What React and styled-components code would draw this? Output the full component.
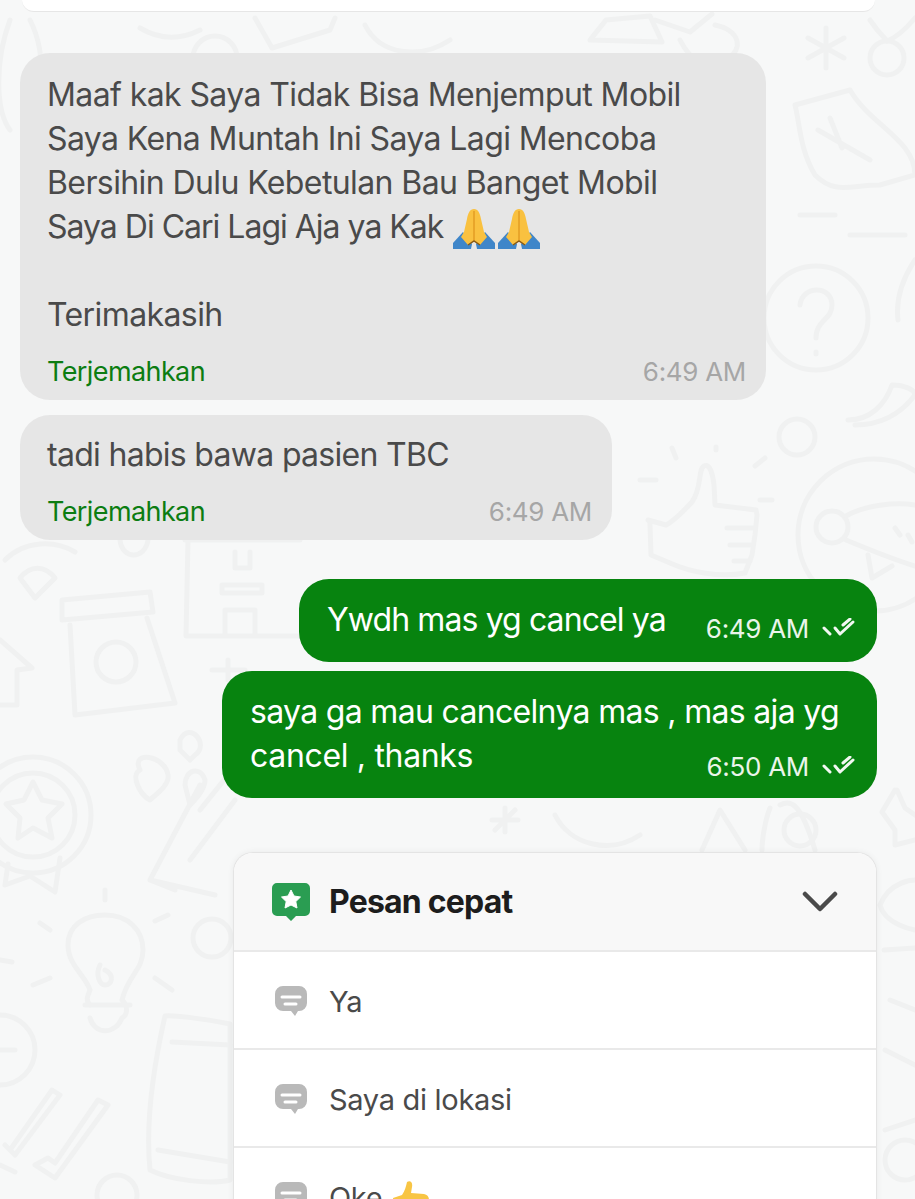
import React from 'react';
import styled, { createGlobalStyle } from 'styled-components';

const GlobalStyle = createGlobalStyle`
  html, body {
    margin: 0;
    padding: 0;
    background: #f7f8f8;
  }
`;

const Page = styled.div`
  position: relative;
  width: 915px;
  height: 1199px;
  overflow: hidden;
  background: #f7f8f8;
  font-family: 'Inter', 'Liberation Sans', sans-serif;
`;

const Wallpaper = styled.svg`
  position: absolute;
  inset: 0;
  width: 915px;
  height: 1199px;
  fill: none;
  stroke: #f0f1f1;
  stroke-width: 5;
  stroke-linecap: round;
  stroke-linejoin: round;
`;

const Thread = styled.div`
  position: relative;
  display: flex;
  flex-direction: column;
`;

const TopCard = styled.div`
  height: 12px;
  margin: 0 40px 41px 22px;
  background: #fff;
  border-bottom: 1px solid #e6e6e6;
  border-radius: 0 0 22px 22px;
  box-sizing: border-box;
`;

const Received = styled.div`
  box-sizing: border-box;
  width: ${p => p.$width}px;
  margin: 0 0 ${p => p.$after}px 20px;
  padding: ${p => p.$top}px 20px 10px 27px;
  background: #e6e6e6;
  border-radius: 30px;
  color: #4a4a4a;
`;

const MessageText = styled.div`
  font-size: 32px;
  line-height: 44px;
  letter-spacing: ${p => p.$spacing ?? -0.6}px;
  white-space: pre-line;
`;

const TightLine = styled.span`
  letter-spacing: -1px;
`;

const Emoji = styled.svg`
  display: inline-block;
  width: 44px;
  height: 42px;
  margin: -10px 0 -10px 1px;
  vertical-align: -2px;
`;

const ReceivedFooter = styled.div`
  display: flex;
  justify-content: space-between;
  align-items: center;
  height: 38px;
  margin-top: 15px;
`;

const Translate = styled.span`
  font-size: 27px;
  letter-spacing: -0.6px;
  color: #0c7d12;
`;

const Time = styled.span`
  font-size: 26px;
  letter-spacing: -0.3px;
  color: ${p => p.$light ? '#eaf5ea' : '#a6a6a6'};
`;

const Sent = styled.div`
  box-sizing: border-box;
  align-self: flex-end;
  width: ${p => p.$width}px;
  margin: 0 38px ${p => p.$after}px 0;
  padding: 19px 21px 20px 28px;
  background: #07830f;
  border-radius: 30px;
  color: #fff;
`;

const SentRow = styled.div`
  display: flex;
  justify-content: space-between;
  align-items: center;
  height: 44px;
`;

const Meta = styled.div`
  display: flex;
  align-items: center;
  gap: 13px;
  margin-top: ${p => p.$drop}px;
`;

const Ticks = styled.svg`
  width: 34px;
  height: 20px;
  fill: none;
  stroke: #f2f8f2;
  stroke-width: 3;
  stroke-linecap: round;
  stroke-linejoin: round;
`;

const QuickCard = styled.div`
  box-sizing: border-box;
  width: 644px;
  margin-left: 233px;
  background: #fff;
  border: 1px solid #e4e4e4;
  border-bottom: none;
  border-radius: 20px 20px 0 0;
  box-shadow: 0 0 6px rgba(0, 0, 0, 0.06);
  overflow: hidden;
`;

const QuickHeader = styled.div`
  box-sizing: border-box;
  display: flex;
  align-items: center;
  height: 99px;
  padding: 0 38px;
  background: #f8f8f8;
  border-bottom: 2px solid #e9e9e9;
`;

const QuickTitle = styled.div`
  flex: 1;
  margin-left: 19px;
  font-size: 32px;
  font-weight: 700;
  letter-spacing: -0.8px;
  color: #1d1d1d;
`;

const QuickRow = styled.div`
  box-sizing: border-box;
  display: flex;
  align-items: center;
  gap: 22px;
  height: 98px;
  padding: 2px 0 0 41px;
  border-bottom: 2px solid #e9e9e9;
  font-size: 29px;
  letter-spacing: -0.3px;
  color: #4a4a4a;
`;

const RowIcon = styled.svg`
  flex: none;
  width: 32px;
  height: 32px;
  margin-top: 2px;
`;

const ThumbEmoji = styled.svg`
  width: 42px;
  height: 42px;
  margin: -10px 0 -10px 8px;
  vertical-align: -4px;
`;

const PrayEmoji = () => (
  <Emoji viewBox="0 0 44 42">
    <path d="M1 35 L11 24 L20 36 L19 41 L1 41 Z" fill="#3f86c9" />
    <path d="M43 35 L33 24 L24 36 L25 41 L43 41 Z" fill="#3f86c9" />
    <path d="M22 1 C18 1 16 5 15 11 L12 24 L9 29 L16 37 L22 33 L28 37 L35 29 L32 24 L29 11 C28 5 26 1 22 1 Z" fill="#f9c140" />
    <path d="M22 3 L22 32" stroke="#e29a22" strokeWidth="1.4" fill="none" />
    <path d="M16 37 L22 33 L28 37" stroke="#8a5a14" strokeWidth="1.5" fill="none" />
  </Emoji>
);

const DoubleTick = () => (
  <Ticks viewBox="0 0 34 20">
    <path d="M2 10 L8 16" />
    <path d="M13 10 L18 16 L31 4" />
    <path d="M21 7 L28 1" />
  </Ticks>
);

const StarBadge = () => (
  <svg width="38" height="38" viewBox="0 0 38 38">
    <path d="M5 0 H33 A5 5 0 0 1 38 5 V28 A5 5 0 0 1 33 33 H24 L19 38 L14 33 H5 A5 5 0 0 1 0 28 V5 A5 5 0 0 1 5 0 Z" fill="#2a9d52" />
    <path d="M19 7 L22 13 L28.5 14 L23.8 18.6 L25 25 L19 22 L13 25 L14.2 18.6 L9.5 14 L16 13 Z" fill="#fff" stroke="#fff" strokeWidth="1" strokeLinejoin="round" />
  </svg>
);

const Chevron = () => (
  <svg width="36" height="22" viewBox="0 0 36 22" fill="none" stroke="#4a4a4a" strokeWidth="4.5" strokeLinecap="round" strokeLinejoin="round">
    <path d="M3 3 L18 18 L33 3" />
  </svg>
);

const ReplyIcon = () => (
  <RowIcon viewBox="0 0 32 32">
    <path d="M8 0 H24 A8 8 0 0 1 32 8 V17 A8 8 0 0 1 24 25 H23 L20 30 L16 25 H8 A8 8 0 0 1 0 17 V8 A8 8 0 0 1 8 0 Z" fill="#b9b9b9" />
    <path d="M7 11 H25" stroke="#fff" strokeWidth="3" strokeLinecap="round" />
    <path d="M10 18 H21" stroke="#fff" strokeWidth="3" strokeLinecap="round" />
  </RowIcon>
);

const ThumbUp = () => (
  <ThumbEmoji viewBox="0 0 42 42">
    <path d="M17 2 C20 0 23 2 22 7 L21 13 L34 14 C40 15 40 22 37 24 C39 28 37 32 34 33 H12 L4 30 L3 18 L12 15 C15 11 16 6 17 2 Z" fill="#f8c544" />
  </ThumbEmoji>
);

// coretan latar belakang, posisinya memang bebas
const Doodles = () => (
  <Wallpaper viewBox="0 0 915 1199">
    {/* kiri atas */}
    <path d="M10 20 C-5 60 -5 110 10 130" />
    <path d="M30 20 C40 40 42 60 40 70" />
    <circle cx="215" cy="58" r="22" />
    <path d="M140 28 C160 40 180 40 200 30" />
    <path d="M255 18 L272 48 L330 30 L335 18" />
    <path d="M365 25 C380 55 420 60 450 40" />
    <path d="M590 40 L606 20 L650 16 L662 42 Z" />
    <path d="M655 20 L690 32 L712 14" />
    <path d="M715 25 C740 30 745 50 725 60 C705 70 690 60 680 40" />
    <path d="M826 28 V68 M808 38 L844 58 M844 38 L808 58" />
    <circle cx="887" cy="58" r="17" />
    <path d="M870 20 C880 35 885 38 887 41 M915 18 C905 30 895 38 887 41" />
    {/* kanan */}
    <path d="M795 105 L850 90 C870 125 915 140 915 175 L880 185 C850 185 835 195 815 175 C800 150 800 125 795 105 Z" />
    <path d="M818 130 L870 160 M830 118 L842 148" />
    <path d="M800 215 H835 M850 235 H905" />
    <circle cx="816" cy="318" r="52" />
    <path d="M800 305 C802 285 832 285 832 305 C832 320 816 320 816 338" />
    <path d="M816 352 V354" />
    <path d="M915 260 C905 275 895 295 898 320" />
    <path d="M848 420 C870 420 885 405 892 385 C905 385 915 390 915 395" />
    <path d="M855 425 C880 425 900 415 915 395" />
    <circle cx="797" cy="437" r="18" />
    <circle cx="874" cy="535" r="76" />
    <circle cx="832" cy="527" r="16" />
    <path d="M846 516 C865 505 895 502 915 505 M846 540 C870 550 895 560 915 566" />
    <path d="M868 555 L872 578 L892 566" />
    <path d="M895 528 L900 535 M908 535 L912 542" />
    {/* jempol */}
    <path d="M648 520 L650 522 V525 L651 555 L670 563 C690 572 720 578 745 573 L752 555 L755 535 L757 515 L756 510 L715 505 L714 485 C712 468 708 464 704 466 C698 469 702 488 692 502 C680 515 672 522 666 525 Z" />
    <path d="M727 528 H755 M730 545 H752 M734 561 H750" />
    <path d="M716 447 V450 M672 448 L676 458 M765 458 L755 466 M640 480 H656 M760 500 H772" />
    {/* wifi, toples, toko */}
    <path d="M5 560 C25 540 55 540 75 552" />
    <path d="M20 578 L35 598 L55 578 C45 565 30 565 20 578 Z" />
    <path d="M120 540 C122 560 145 560 148 540" />
    <path d="M62 600 L150 592 L153 612 L62 620 Z" />
    <path d="M70 625 L75 715 L175 703 L147 618" />
    <circle cx="116" cy="662" r="20" />
    <path d="M185 540 H300 M188 540 L186 636 H300 M225 636 V610 H255 V636" />
    <path d="M222 585 H262 V593 H222 Z M235 552 V568 H250 V552" />
    <path d="M0 640 L32 668 L17 670 V705 H-5" />
    <path d="M228 660 V680 M212 670 H245" />
    <path d="M180 740 C190 720 210 745 195 755 L190 760 L180 750 Z" />
    <path d="M140 770 C130 750 165 755 168 775 C170 785 155 795 150 800 C140 795 130 775 140 770 Z" />
    <path d="M185 785 C185 770 200 765 205 780 C205 790 195 800 190 805 Z" />
    <path d="M200 810 L240 760" />
    {/* medali */}
    <circle cx="33" cy="815" r="58" />
    <circle cx="33" cy="815" r="42" />
    <path d="M33 782 L42 800 L62 804 L48 818 L52 838 L33 828 L18 838 L20 818 L6 804 L24 800 Z" />
    <path d="M8 864 L5 885 L30 876 L55 892 L60 858" />
    {/* lampu */}
    <path d="M90 990 C85 975 68 965 68 945 C68 925 85 915 105 915 C128 915 143 930 143 950 C143 970 128 975 122 1000 M85 1005 H130 M90 1018 C95 1035 115 1035 122 1018 M90 1005 C85 1000 88 995 90 990 M122 1000 C128 1005 128 1015 122 1018" />
    <path d="M105 890 V900 M40 923 L50 930 M168 915 L155 921 M33 985 L50 978 M155 978 L172 990 M0 960 L12 962" />
    <path d="M100 965 C95 975 100 985 105 985 C112 985 115 975 105 970" />
    <circle cx="212" cy="938" r="19" />
    <path d="M175 890 L150 880 L200 785 M215 895 L150 880" />
    {/* hp dan centang */}
    <path d="M165 1016 C172 1015 200 1018 230 1024 V1180 C210 1185 170 1180 150 1170 C145 1120 155 1060 165 1016 Z" />
    <path d="M172 1042 L230 1045 M158 1150 L230 1162" />
    <circle cx="0" cy="1050" r="35" />
    <path d="M-5 1035 V1065 M-15 1050 H15" />
    <path d="M5 1145 L15 1155 L60 1095 L52 1090 L10 1150 M0 1165 L15 1172" />
    <path d="M35 1165 L55 1178 L108 1105 L98 1100 L55 1163 L48 1158 Z" />
    <circle cx="117" cy="1195" r="20" />
    {/* kanan bawah */}
    <path d="M897 790 L905 808 L915 815 M895 790 L882 812 L895 830 L895 845 L915 840" />
    <path d="M880 905 C890 880 915 880 915 880 M880 905 C885 925 915 930 915 930" />
    <path d="M884 950 L915 948 M890 1000 L915 1010 M885 1050 L915 1065 M885 1130 L915 1120" />
    <circle cx="905" cy="1160" r="20" />
    <path d="M780 805 C790 800 800 800 815 850 M770 808 C765 820 762 840 762 850" />
    <circle cx="800" cy="830" r="16" />
    <path d="M555 815 C570 845 610 855 640 835" />
    <path d="M702 850 L720 810 L745 850" />
    <path d="M495 830 L515 810 M505 808 L505 832 M492 820 L518 820" />
    <path d="M190 860 L235 800" />
  </Wallpaper>
);

const App = () => (
  <Page>
    <GlobalStyle />
    <Doodles />
    <Thread>
      <TopCard />

      <Received $width={746} $top={20} $after={15}>
        <MessageText>
          {'Maaf kak Saya Tidak Bisa Menjemput Mobil\nSaya Kena Muntah Ini Saya Lagi Mencoba\nBersihin Dulu Kebetulan Bau Banget Mobil\n'}
          <TightLine>Saya Di Cari Lagi Aja ya Kak </TightLine>
          <PrayEmoji /><PrayEmoji />
          {'\n\nTerimakasih'}
        </MessageText>
        <ReceivedFooter>
          <Translate>Terjemahkan</Translate>
          <Time>6:49 AM</Time>
        </ReceivedFooter>
      </Received>

      <Received $width={592} $top={18} $after={39}>
        <MessageText $spacing={-0.7}>tadi habis bawa pasien TBC</MessageText>
        <ReceivedFooter>
          <Translate>Terjemahkan</Translate>
          <Time>6:49 AM</Time>
        </ReceivedFooter>
      </Received>

      <Sent $width={578} $after={9}>
        <SentRow>
          <MessageText $spacing={-0.9}>Ywdh mas yg cancel ya</MessageText>
          <Meta $drop={16}>
            <Time $light>6:49 AM</Time>
            <DoubleTick />
          </Meta>
        </SentRow>
      </Sent>

      <Sent $width={655} $after={54}>
        <MessageText $spacing={-0.68}>saya ga mau cancelnya mas , mas aja yg</MessageText>
        <SentRow>
          <MessageText $spacing={-0.33}>cancel , thanks</MessageText>
          <Meta $drop={20}>
            <Time $light>6:50 AM</Time>
            <DoubleTick />
          </Meta>
        </SentRow>
      </Sent>

      <QuickCard>
        <QuickHeader>
          <StarBadge />
          <QuickTitle>Pesan cepat</QuickTitle>
          <Chevron />
        </QuickHeader>
        <QuickRow><ReplyIcon />Ya</QuickRow>
        <QuickRow><ReplyIcon />Saya di lokasi</QuickRow>
        <QuickRow>
          <ReplyIcon />
          <span>Oke<ThumbUp /></span>
        </QuickRow>
      </QuickCard>
    </Thread>
  </Page>
);

export default App;
